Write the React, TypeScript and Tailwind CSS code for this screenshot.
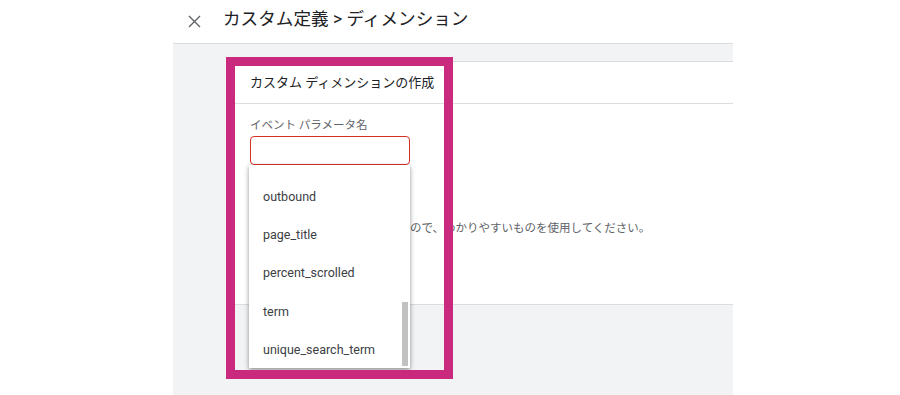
import React from "react";

const items = ["outbound", "page_title", "percent_scrolled", "term", "unique_search_term"];

export default function App() {
  return (
    <div
      className="relative flex w-[900px] h-[395px] overflow-hidden bg-white"
      style={{ fontFamily: 'Roboto, "Noto Sans CJK JP", "Noto Sans", sans-serif' }}
    >
      <div className="w-[173px] shrink-0 bg-white" />
      <div className="flex w-[560px] shrink-0 flex-col">
        <div className="flex h-[44px] shrink-0 items-center border-b border-[#dadce0] bg-white">
          <svg width="13" height="13" viewBox="0 0 13 13" className="ml-[15px] mr-[22px]">
            <path d="M1 1 L12 12 M12 1 L1 12" stroke="#5f6368" strokeWidth="1.4" />
          </svg>
          <span className="text-[17.6px] leading-none text-[#202124] -mt-[3px]">カスタム定義 &gt; ディメンション</span>
        </div>
        <div className="flex-1 bg-[#f1f3f4] pl-[53px] pt-[17px]">
          <div className="flex h-[244px] flex-col border-y border-l border-[#dadce0] bg-white">
            <div className="flex h-[42px] shrink-0 items-center border-b border-[#dadce0] pl-[23px] text-[13px] text-[#202124]">
              カスタム ディメンションの作成
            </div>
            <div className="flex flex-col pl-[23px]">
              <div className="mt-[13px] text-[11.5px] leading-[16px] text-[#5f6368]">イベント パラメータ名</div>
              <div className="mt-[3px] h-[29px] w-[160px] rounded-[4px] border-[1.5px] border-[#d93025] bg-white" />
              <div className="mt-[55px] pl-[160px] text-[11.5px] leading-[16px] text-[#5f6368] whitespace-nowrap">
                ので、わかりやすいものを使用してください。
              </div>
            </div>
          </div>
        </div>
      </div>
      <div className="flex-1 bg-white" />

      <div className="absolute left-[249px] top-[165px] h-[203px] w-[161px] bg-white pt-[13px] shadow-[0_2px_4px_rgba(0,0,0,0.3),0_1px_6px_rgba(0,0,0,0.15)]">
        {items.map((it) => (
          <div key={it} className="flex h-[38.3px] items-center pl-[14px] text-[12.5px] text-[#3c4043]">
            {it}
          </div>
        ))}
        <div className="absolute right-[2px] top-[137px] h-[64px] w-[6px] bg-[#c1c1c1]" />
      </div>

      <div className="absolute left-[226px] top-[57px] h-[322px] w-[227px] border-[9px] border-[#c92a7e]" />
    </div>
  );
}
